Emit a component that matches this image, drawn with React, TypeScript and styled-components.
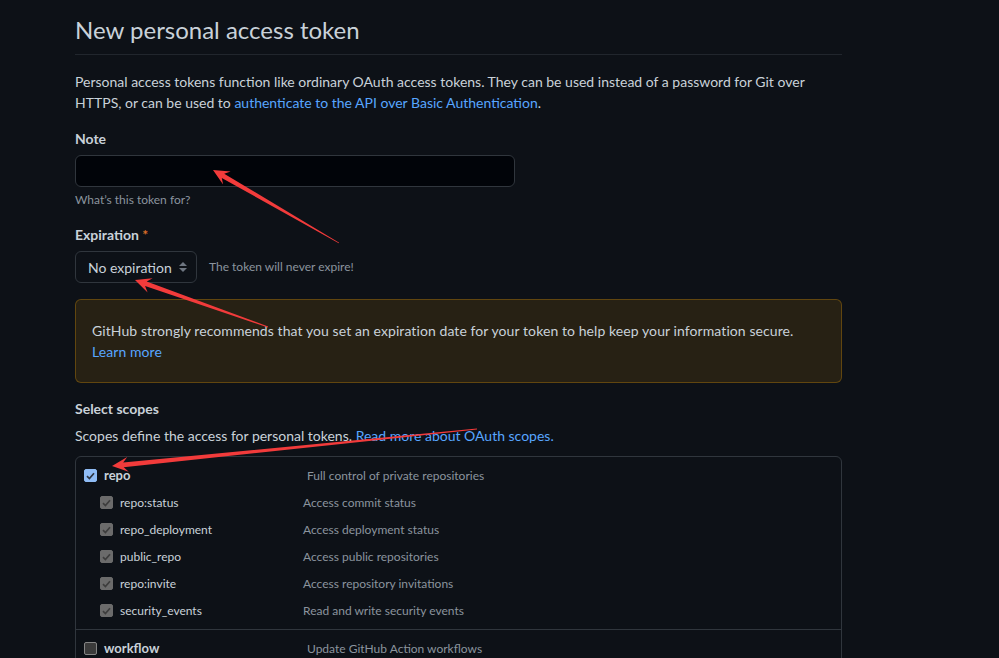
import React from "react";
import styled, { createGlobalStyle } from "styled-components";

const GlobalStyle = createGlobalStyle`
  html, body {
    margin: 0;
    background: #0d1117;
  }
  body {
    color: #c9d1d9;
    font-family: Lato, "Liberation Sans", sans-serif;
    font-size: 14px;
    line-height: 1.5;
  }
  * { box-sizing: border-box; }
`;

const Page = styled.div`
  position: relative;
  width: 842px;
  padding: 15px 0 40px 75px;
`;

const Header = styled.div`
  border-bottom: 1px solid #21262d;
  padding-bottom: 9px;
`;

const Title = styled.h2`
  margin: 0;
  font-size: 24px;
  font-weight: 400;
  line-height: 30px;
  color: #c9d1d9;
`;

const Paragraph = styled.p<{ $mt?: number }>`
  margin: ${(p) => p.$mt ?? 0}px 0 0;
  line-height: 21px;
`;

const Link = styled.a`
  color: #58a6ff;
  text-decoration: none;
`;

const Group = styled.div<{ $mt?: number }>`
  margin-top: ${(p) => p.$mt ?? 15}px;
`;

const Label = styled.label`
  display: block;
  font-weight: 700;
  line-height: 21px;
  margin-bottom: 6px;
`;

const Required = styled.span`
  color: #db6d28;
`;

const TextInput = styled.div`
  width: 440px;
  height: 32px;
  background: #010409;
  border: 1px solid #30363d;
  border-radius: 6px;
`;

const Note = styled.p`
  margin: 4px 0 0;
  font-size: 12px;
  line-height: 18px;
  color: #8b949e;
`;

const InlineRow = styled.div`
  display: flex;
  align-items: center;
  gap: 12px;
`;

const Select = styled.div`
  width: 122px;
  height: 32px;
  display: flex;
  align-items: center;
  justify-content: space-between;
  padding: 0 9px 0 12px;
  border: 1px solid #30363d;
  border-radius: 6px;
  background: #0d1117;
  color: #c9d1d9;
  font-size: 14px;
`;

const Hint = styled.span`
  font-size: 12px;
  color: #8b949e;
`;

const Flash = styled.div`
  margin-top: 16px;
  padding: 20px 16px;
  border: 1px solid rgba(187, 128, 9, 0.4);
  background: rgba(187, 128, 9, 0.15);
  border-radius: 6px;
  line-height: 21px;
  letter-spacing: 0.08px;
`;

const BlockLink = styled(Link)`
  display: block;
`;

const ScopeBox = styled.div`
  margin-top: 10px;
  border: 1px solid #30363d;
  border-radius: 6px;
`;

const ScopeGroup = styled.div<{ $divider?: boolean }>`
  padding: 5px 8px;
  border-top: ${(p) => (p.$divider ? "1px solid #30363d" : "none")};
`;

const ScopeRow = styled.div<{ $child?: boolean }>`
  display: flex;
  align-items: center;
  height: 27px;
  padding-left: ${(p) => (p.$child ? 16 : 0)}px;
`;

const NameCell = styled.div<{ $child?: boolean }>`
  display: flex;
  align-items: center;
  gap: 7px;
  width: ${(p) => (p.$child ? 203 : 223)}px;
  flex-shrink: 0;
`;

const ScopeName = styled.span<{ $bold?: boolean }>`
  font-size: ${(p) => (p.$bold ? 13 : 12)}px;
  font-weight: ${(p) => (p.$bold ? 700 : 400)};
  color: #c9d1d9;
`;

const ScopeDesc = styled.span`
  font-size: 12px;
  color: #8b949e;
`;

type BoxState = "checked" | "disabled" | "unchecked";

const Box = styled.span<{ $state: BoxState }>`
  width: 13px;
  height: 13px;
  border-radius: 2px;
  display: inline-flex;
  align-items: center;
  justify-content: center;
  flex-shrink: 0;
  background: ${(p) =>
    p.$state === "checked" ? "#8fbcf5" : p.$state === "disabled" ? "#6b6b6b" : "#3b3b3b"};
  border: 1px solid
    ${(p) =>
      p.$state === "checked" ? "#8fbcf5" : p.$state === "disabled" ? "#6b6b6b" : "#858585"};
`;

const Overlay = styled.svg`
  position: absolute;
  left: 0;
  top: 0;
  pointer-events: none;
`;

const Checkbox = ({ state }: { state: BoxState }) => (
  <Box $state={state}>
    {state !== "unchecked" && (
      <svg width="9" height="8" viewBox="0 0 9 8">
        <path
          d="M1 4.2 L3.4 6.5 L8 1.2"
          fill="none"
          stroke={state === "checked" ? "#2d3440" : "#3d3d3d"}
          strokeWidth="1.7"
        />
      </svg>
    )}
  </Box>
);

const UpDown = () => (
  <svg width="8" height="12" viewBox="0 0 8 12">
    <path d="M0 5 L4 1 L8 5 Z" fill="#6e7681" />
    <path d="M0 7 L4 11 L8 7 Z" fill="#6e7681" />
  </svg>
);

type P = [number, number];

function arrowPoints(tail: P, tip: P, headLen = 16, headHalf = 7.5, neckHalf = 2.4, tailHalf = 0.4) {
  const dx = tip[0] - tail[0];
  const dy = tip[1] - tail[1];
  const len = Math.hypot(dx, dy);
  const ux = dx / len;
  const uy = dy / len;
  const nx = -uy;
  const ny = ux;
  const at = (d: number, w: number): string =>
    `${(tip[0] - ux * d + nx * w).toFixed(1)},${(tip[1] - uy * d + ny * w).toFixed(1)}`;
  const neck = headLen * 0.72;
  return [
    at(0, 0),
    at(headLen, headHalf),
    at(neck, neckHalf),
    `${(tail[0] + nx * tailHalf).toFixed(1)},${(tail[1] + ny * tailHalf).toFixed(1)}`,
    `${(tail[0] - nx * tailHalf).toFixed(1)},${(tail[1] - ny * tailHalf).toFixed(1)}`,
    at(neck, -neckHalf),
    at(headLen, -headHalf),
  ].join(" ");
}

const arrows: { tail: P; tip: P }[] = [
  { tail: [339, 243], tip: [213, 170] },
  { tail: [268, 327], tip: [135, 280] },
  { tail: [477, 429], tip: [112, 466] },
];

const children = [
  ["repo:status", "Access commit status"],
  ["repo_deployment", "Access deployment status"],
  ["public_repo", "Access public repositories"],
  ["repo:invite", "Access repository invitations"],
  ["security_events", "Read and write security events"],
];

export default function App() {
  return (
    <>
      <GlobalStyle />
      <Page>
        <Header>
          <Title>New personal access token</Title>
        </Header>
        <Paragraph $mt={16}>
          Personal access tokens function like ordinary OAuth access tokens. They can be used instead of a
          password for Git over HTTPS, or can be used to{" "}
          <Link>authenticate to the API over Basic Authentication</Link>.
        </Paragraph>

        <Group>
          <Label>Note</Label>
          <TextInput />
          <Note>What’s this token for?</Note>
        </Group>

        <Group>
          <Label>
            Expiration <Required>*</Required>
          </Label>
          <InlineRow>
            <Select>
              <span>No expiration</span>
              <UpDown />
            </Select>
            <Hint>The token will never expire!</Hint>
          </InlineRow>
        </Group>

        <Flash>
          GitHub strongly recommends that you set an expiration date for your token to help keep your
          information secure.
          <BlockLink>Learn more</BlockLink>
        </Flash>

        <Group>
          <Label>Select scopes</Label>
          <Paragraph>
            Scopes define the access for personal tokens. <Link>Read more about OAuth scopes.</Link>
          </Paragraph>
          <ScopeBox>
            <ScopeGroup>
              <ScopeRow>
                <NameCell>
                  <Checkbox state="checked" />
                  <ScopeName $bold>repo</ScopeName>
                </NameCell>
                <ScopeDesc>Full control of private repositories</ScopeDesc>
              </ScopeRow>
              {children.map(([n, d]) => (
                <ScopeRow $child key={n}>
                  <NameCell $child>
                    <Checkbox state="disabled" />
                    <ScopeName>{n}</ScopeName>
                  </NameCell>
                  <ScopeDesc>{d}</ScopeDesc>
                </ScopeRow>
              ))}
            </ScopeGroup>
            <ScopeGroup $divider>
              <ScopeRow>
                <NameCell>
                  <Checkbox state="unchecked" />
                  <ScopeName $bold>workflow</ScopeName>
                </NameCell>
                <ScopeDesc>Update GitHub Action workflows</ScopeDesc>
              </ScopeRow>
            </ScopeGroup>
          </ScopeBox>
        </Group>

        <Overlay width="999" height="658" viewBox="0 0 999 658">
          {arrows.map((a, i) => (
            <polygon key={i} points={arrowPoints(a.tail, a.tip)} fill="#f23b3b" />
          ))}
        </Overlay>
      </Page>
    </>
  );
}
